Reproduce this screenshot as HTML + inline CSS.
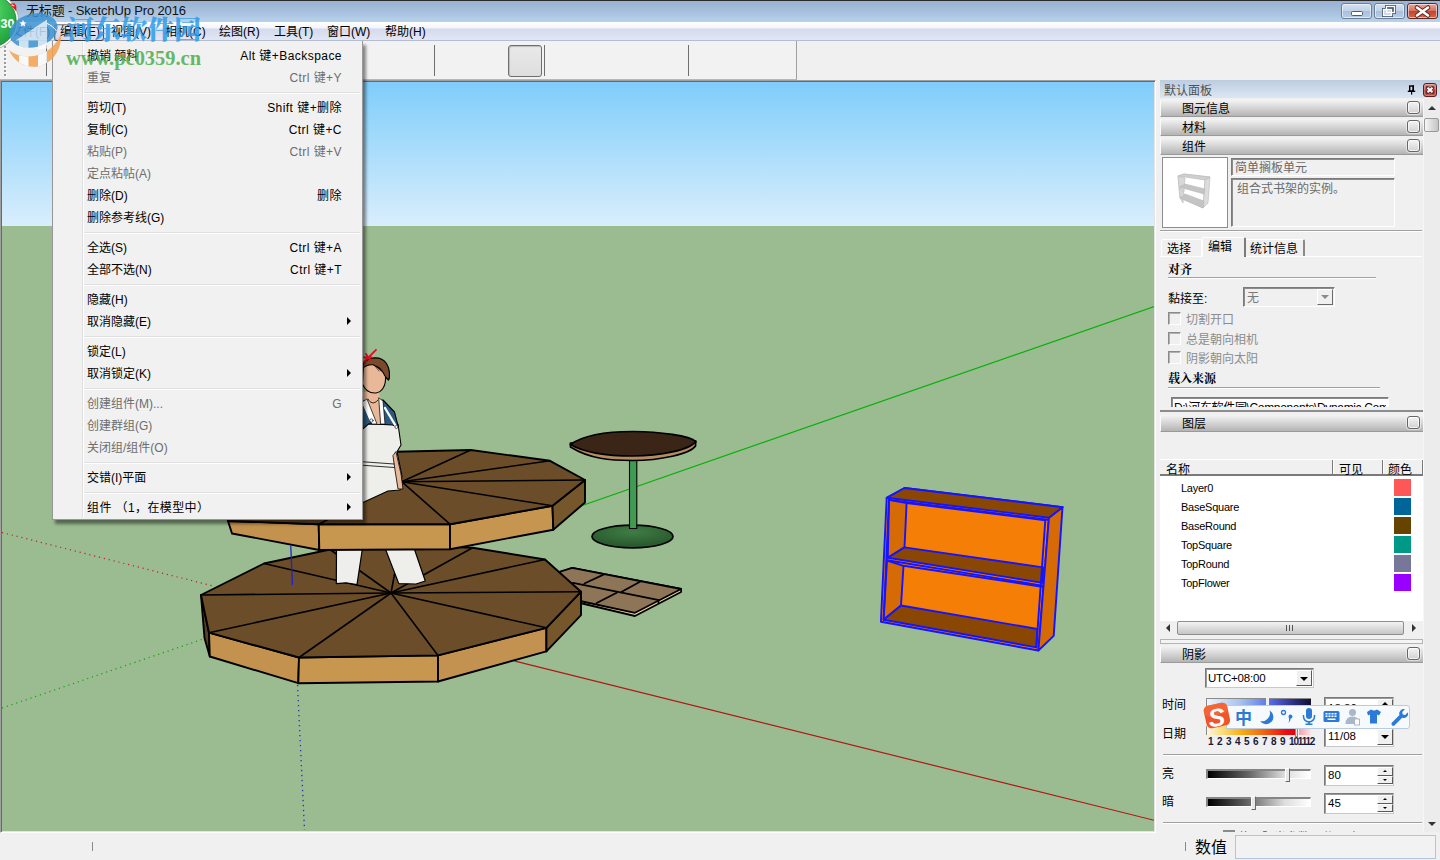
<!DOCTYPE html>
<html lang="zh-CN">
<head>
<meta charset="utf-8">
<title>无标题 - SketchUp Pro 2016</title>
<style>
*{box-sizing:border-box;margin:0;padding:0}
html,body{width:1440px;height:860px;overflow:hidden;background:#f0f0f0}
body{position:relative;font-family:"Liberation Sans","Noto Sans CJK SC",sans-serif;font-size:12px;color:#000}
.abs{position:absolute}
/* title bar */
#title{left:0;top:0;width:1440px;height:22px;background:linear-gradient(#98b3d3 0,#a3bddb 9px,#b9d2ec 21px);border-top:1px solid #2a2a2a}
#title .t{left:26px;top:1px;letter-spacing:-.15px;font-size:13px;line-height:18px;color:#111;white-space:nowrap}
.wb{top:2px;height:16px;border:1px solid #6d7f96;border-radius:3px;background:linear-gradient(#d3e0f0 0,#c2d3e8 48%,#a9c0dc 52%,#b9cde6 100%);box-shadow:inset 0 0 0 1px rgba(255,255,255,.55)}
#menubar{left:0;top:22px;width:1440px;height:19px;background:linear-gradient(#ffffff 0,#f3f5fb 6px,#d5daec 7px,#dde2f2 14px,#e2e7f5 18px);border-bottom:1px solid #b4bccf}
#menubar span{position:absolute;top:0;line-height:20px;font-size:12px;white-space:nowrap}
#toolbar{left:0;top:41px;width:1440px;height:39px;background:#f0f0f0}
.vsep{width:1px;background:#6f6f6f}
/* viewport */
#vp{left:0;top:80px;width:1156px;height:753px;background:#696969;border:1px solid;border-color:#a0a0a0 #fff #fff #a0a0a0}
#vp svg{position:absolute;left:1px;top:1px;border-right:1px solid #e3e3e3;border-bottom:1px solid #e3e3e3;box-sizing:content-box}
/* status */
#status{left:0;top:833px;width:1440px;height:27px;background:#f0f0f0}
/* menu */
#menu{left:52px;top:41px;width:311px;height:479px;background:#f1f1f1;border:1px solid #979797;border-top:none;box-shadow:3px 4px 3px rgba(0,0,0,.45)}
#menu .gut{position:absolute;left:29px;top:1px;bottom:1px;width:2px;border-left:1px solid #e0e0e0;border-right:1px solid #fff}
#menu .it{position:absolute;left:34px;right:20px;height:22px;line-height:26px;font-size:12px;white-space:nowrap}
#menu .it b{font-weight:normal;position:absolute;right:0;top:0;letter-spacing:.45px}
#menu .dis{color:#6d6d6d}
#menu .sp{position:absolute;left:31px;right:2px;height:2px;border-top:1px solid #e0e0e0;border-bottom:1px solid #fff}
#menu .ar{position:absolute;right:11px;width:0;height:0;border-left:4px solid #000;border-top:4px solid transparent;border-bottom:4px solid transparent}
/* panel */
#panel{left:0;top:0;width:0;height:0;white-space:nowrap}
.sunk{border:1px solid;border-color:#7a7a7a #fff #fff #7a7a7a;box-shadow:inset 1px 1px 0 #8c8c8c;background:#f0f0f0}
.hl{height:2px;border-top:1px solid #a0a0a0;border-bottom:1px solid #fff}
.bs{font-family:"Liberation Serif","Noto Serif CJK SC",serif;font-weight:bold;font-size:12px;line-height:19px}
.sec{width:263px;height:17px;background:linear-gradient(#f4f4f4 0,#d8d8d8 45%,#b4b4b4 100%);border-left:1px solid #fafafa;border-bottom:1px solid #9a9a9a;font-size:12px;line-height:19px;padding-left:21px;white-space:nowrap}
.sec i{position:absolute;right:3px;top:1px;width:13px;height:13px;border:1px solid #666;border-radius:3px;background:linear-gradient(#f4f4f4,#d2d2d2);box-shadow:inset 0 0 0 1px rgba(255,255,255,.7),0 0 0 1px rgba(240,240,240,.7)}
</style>
</head>
<body>
<div id="title" class="abs"><div class="t abs">无标题 - SketchUp Pro 2016</div>
<div class="wb abs" style="left:1341px;width:31px"></div>
<div class="wb abs" style="left:1374px;width:31px"></div>
<div class="wb abs" style="left:1407px;width:31px;background:linear-gradient(#e9a99b 0,#d9705c 48%,#c4442c 52%,#d2674c 100%);border-color:#5c2a22"></div>
<svg class="abs" style="left:1341px;top:1px" width="97" height="18" viewBox="0 0 97 18">
<rect x="10.500" y="9.500" width="11" height="4" rx="1" fill="#fff" stroke="#4a5a70" stroke-width="1"/>
<g fill="none" stroke="#4a5a70" stroke-width="3"><rect x="45.500" y="4.500" width="8" height="6"/><rect x="42.500" y="7.500" width="8" height="6"/></g>
<rect x="42.500" y="7.500" width="8" height="6" fill="#c6d6ea"/>
<g fill="none" stroke="#fff" stroke-width="1.300"><rect x="45.500" y="4.500" width="8" height="6"/><rect x="42.500" y="7.500" width="8" height="6"/></g>
<path d="M76 5.500 L87 13.500 M87 5.500 L76 13.500" stroke="#5a2a22" stroke-width="4.500" stroke-linecap="round"/>
<path d="M76 5.500 L87 13.500 M87 5.500 L76 13.500" stroke="#fff" stroke-width="2.600" stroke-linecap="round"/>
</svg>
</div>
<div id="menubar" class="abs">
<div class="abs" style="left:54px;top:2px;width:50px;height:17px;border:1px solid;border-color:#8a8f9c #4d525e #3a3f4a #6a6f7c;border-radius:3px;background:linear-gradient(#e9ecf5,#d3d8e8);box-shadow:inset 1px 1px 1px rgba(0,0,0,.18)"></div>
<span style="left:11px;color:#1a1a1a">文件(F)</span><span style="left:60px">编辑(E)</span><span style="left:111px">视图(V)</span><span style="left:165px">相机(C)</span><span style="left:219px">绘图(R)</span><span style="left:274px">工具(T)</span><span style="left:327px">窗口(W)</span><span style="left:385px">帮助(H)</span>
</div>
<div id="toolbar" class="abs">
<div class="abs" style="left:0;top:0;width:797px;height:39px;background:#f2f2f2;border-right:1px solid #a0a0a0;border-bottom:1px solid #b8b8b8"></div>
<div class="abs" style="left:4px;top:3px;width:2px;height:34px;background:repeating-linear-gradient(#f0f0f0 0,#f0f0f0 2px,#9c9c9c 2px,#9c9c9c 4px)"></div><div class="abs" style="left:5px;top:4px;width:2px;height:34px;background:repeating-linear-gradient(transparent 0,transparent 3px,#fff 3px,#fff 4px)"></div>
<div class="vsep abs" style="left:46px;top:4px;height:31px"></div>
<div class="vsep abs" style="left:434px;top:4px;height:31px"></div>
<div class="vsep abs" style="left:544px;top:4px;height:31px"></div>
<div class="vsep abs" style="left:688px;top:4px;height:31px"></div>
<div class="abs" style="left:508px;top:4px;width:34px;height:32px;border:1px solid #6e6e6e;border-radius:3px;background:linear-gradient(#e9e9e9,#dedede);box-shadow:inset 1px 1px 1px #bdbdbd"></div>
</div>
<div id="vp" class="abs">
<svg width="1152" height="749" viewBox="2 82 1152 749">
<defs><linearGradient id="sky" x1="0" y1="0" x2="0" y2="1"><stop offset="0" stop-color="#7fcdfb"/><stop offset="1" stop-color="#d9eefc"/></linearGradient><radialGradient id="tb" cx="0.5" cy="0.3" r="0.6"><stop offset="0" stop-color="#3f7d45"/><stop offset="1" stop-color="#2a5a2e"/></radialGradient></defs>
<rect x="2" y="82" width="1153" height="144" fill="url(#sky)"/>
<rect x="2" y="226" width="1153" height="605" fill="#9bbc91"/>
<!--SCENE-->
<g stroke-linejoin="round" stroke-linecap="round">
<!-- axes -->
<line x1="583" y1="505.2" x2="1155" y2="306.2" stroke="#06b006" stroke-width="1.2"/>
<line x1="515" y1="661.2" x2="1155" y2="820.5" stroke="#b01818" stroke-width="1.2"/>
<line x1="2" y1="532.5" x2="215" y2="586.5" stroke="#c02020" stroke-width="1.2" stroke-dasharray="1.2 3.8" stroke-linecap="butt"/>
<line x1="2" y1="708" x2="206" y2="638" stroke="#10a010" stroke-width="1.2" stroke-dasharray="1.2 3.8" stroke-linecap="butt"/>
<line x1="297.5" y1="685" x2="304.5" y2="830" stroke="#2030c0" stroke-width="1.3" stroke-dasharray="1.3 3.7" stroke-linecap="butt"/>
<!-- tiles -->
<g stroke="#000" stroke-width="1.8">
<polygon points="560,573 572.2,567.8 681.1,589 681.1,592 635,616 582.2,603.5 560,590" fill="#f0d3a2"/>
<polygon points="560,571.7 572.2,567.8 681.1,589 635,612.8 582.2,601.5 565,592" fill="#8f7558"/>
<line x1="573" y1="582.8" x2="659" y2="600.2"/>
<line x1="604" y1="574.4" x2="584.4" y2="583.5"/>
<line x1="640" y1="581.7" x2="621.7" y2="591.7"/>
<line x1="616.7" y1="592.8" x2="596.7" y2="603"/>
<line x1="658.5" y1="600.4" x2="658.5" y2="603"/>
</g>
<!-- lower platform -->
<g stroke="#000" stroke-width="1.9">
<polygon points="201,595 209,632.7 209.8,656.5 204.500,638" fill="#5a4020"/>
<polygon points="209,632.7 299,657.5 298.3,683.2 209.8,656.5" fill="#c4924f"/>
<polygon points="299,657.5 438,655.4 438,681.5 298.3,683.2" fill="#c8974f"/>
<polygon points="438,655.4 546.4,627.8 546.4,651.4 438,681.5" fill="#c39150"/>
<polygon points="546.4,627.8 581,591.7 581,615.2 546.4,651.4" fill="#76572c"/>
<polygon points="201,595 264,563.5 330,549.5 400,545 472.6,547.7 545,559.5 581,591.7 546.4,627.8 438,655.4 299,657.5 209,632.7" fill="#6b4e29"/>
<g stroke-width="1.6">
<line x1="391" y1="593" x2="201" y2="595"/><line x1="391" y1="593" x2="264" y2="563.5"/><line x1="391" y1="593" x2="330" y2="549.5"/><line x1="391" y1="593" x2="400" y2="545"/>
<line x1="391" y1="593" x2="472.6" y2="547.7"/><line x1="391" y1="593" x2="545" y2="559.5"/><line x1="391" y1="593" x2="581" y2="591.7"/><line x1="391" y1="593" x2="546.4" y2="627.8"/>
<line x1="391" y1="593" x2="438" y2="655.4"/><line x1="391" y1="593" x2="299" y2="657.5"/><line x1="391" y1="593" x2="209" y2="632.7"/>
</g>
</g>
<!-- legs -->
<g stroke="#000" stroke-width="1.2" fill="#eeeeea">
<polygon points="336.5,548 362.5,548 357,584.6 346,582.8 336.3,583.6"/>
<polygon points="385,548 414,548 425.3,581 416,584 398.8,583.6"/>
</g>
<line x1="290.8" y1="546.5" x2="292.4" y2="584.4" stroke="#2020c8" stroke-width="1.3"/>
<!-- upper platform -->
<g stroke="#000" stroke-width="1.9">
<polygon points="228,521 318.7,524.2 319.3,550 232,533.5" fill="#c4924f"/>
<polygon points="318.7,524.2 450,524.2 450,549.2 319.3,550" fill="#c8974f"/>
<polygon points="450,524.2 552.5,505.8 553.3,529.7 450,549.2" fill="#c6954f"/>
<polygon points="552.5,505.8 585,480 585,502.5 553.3,529.7" fill="#76572c"/>
<polygon points="228,521 222,497 262,470 330,456 395.8,451.7 470.8,450 550,460.8 585,480 552.5,505.8 450,524.2 318.7,524.2" fill="#6b4e29"/>
<g stroke-width="1.6">
<line x1="401.7" y1="481.7" x2="470.8" y2="450"/><line x1="401.7" y1="481.7" x2="550" y2="460.8"/><line x1="401.7" y1="481.7" x2="585" y2="480"/>
<line x1="401.7" y1="481.7" x2="552.5" y2="505.8"/><line x1="401.7" y1="481.7" x2="450" y2="524.2"/><line x1="401.7" y1="481.7" x2="318.7" y2="524.2"/>
<line x1="401.7" y1="481.7" x2="395.8" y2="451.7"/>
</g>
</g>
<!-- woman upper body -->
<g stroke="#000" stroke-width="1.1">
<polygon points="352,424 398,424 401,445 397,451.7 402,476 400,490 388,491 363,502.5 340,505 340,440" fill="#eeeeea"/>
<polygon points="396,452 401,474 403,489 398,489 395,470 393,456" fill="#e8b898" stroke-width="0.8"/>
<line x1="352" y1="461" x2="394" y2="464" stroke-width="0.8"/><line x1="352" y1="464.5" x2="394" y2="467.5" stroke-width="0.8"/>
<polygon points="350,402 383,400 394.500,412 398.300,427 392.500,425 369,423.700 350,440" fill="#2a5a80"/>
<polygon points="362,392 379,392 380,399 382,424 372,424 364,402" fill="#e8b898" stroke="none"/>
<polygon points="362,402 367,399 377,424 372,424" fill="#fff" stroke-width="0.7"/>
<polygon points="379,398 383,401 385,424 381,424" fill="#fff" stroke-width="0.7"/>
<path d="M368,399 C370,403 374,405 378,400" fill="none" stroke-width="0.8"/>
<line x1="385" y1="408" x2="397" y2="428" stroke="#fff" stroke-width="2.400"/>
<line x1="364" y1="405" x2="371" y2="421" stroke="#fff" stroke-width="2"/>
<circle cx="371.500" cy="420.500" r="1.600" fill="#fff" stroke-width="0.6"/><circle cx="396.500" cy="427" r="1.600" fill="#fff" stroke-width="0.6"/>
<path d="M363.500,364 C368,356.500 381,356 386.500,364 C390,370 390,378 388.500,380 L385.500,377 C386,386 382,392 376,393 C370,393.500 365,390 362.500,384 Z" fill="#e8b898"/>
<path d="M362.500,367 C364,357 380,354.500 386.500,363.500 C390,369 390,377 388.500,380 L385,376 C383,371 378,367 373,364.800 C369,364.500 365,366 362.500,368.500 Z" fill="#7b4a2a"/>
<path d="M375,366 l4,5 M377,366 l4,5 M379,367 l3,4" stroke-width="0.6" fill="none"/>
<path d="M363.400,362.500 L376,349.800 M364,357.500 L372,357.500 M366,354 l4,6" stroke="#e01020" stroke-width="1.800" fill="none"/>
</g>
<!-- table -->
<g stroke="#000" stroke-width="1.7">
<ellipse cx="632.5" cy="536.5" rx="40.5" ry="11.3" fill="url(#tb)"/>
<rect x="629.5" y="457" width="7.3" height="71.5" fill="#3f9a52" stroke-width="1.1"/>
<path d="M570.5,447 C590,459 610,460.5 633,460.5 C660,460.5 690,454 695.5,446 L695.8,441 L570.4,443 Z" fill="#b48c64"/>
<path d="M570.4,444.5 C585,434 610,431.5 633,431.5 C660,431.5 690,436 695.8,441.5 C690,450 660,456 633,456 C610,456 585,453 570.4,444.5 Z" fill="#3a2517"/>
</g>
<!-- bookshelf -->
<g stroke="#1414ff" stroke-width="1.9">
<polygon points="886.7,497.8 904.5,488 1062.5,507.2 1048.9,517.7 1038.4,650.5 880.9,621.8" fill="#f57f06"/>
<polygon points="1048.9,517.7 1062.5,507.2 1053.7,635.9 1038.4,650.5" fill="#d66b05"/>
<polygon points="886.7,497.8 904.5,488 1062.5,507.2 1048.9,517.7" fill="#8a4704"/>
<polygon points="889,499.9 906.6,503 904.5,547.4 887.8,557.8" fill="#d66b05"/>
<polygon points="887,560.5 903.5,565.8 901,605.5 883.6,619.7" fill="#d66b05"/>
<polygon points="887.8,557.8 904.5,547.4 1043.2,567.4 1042.6,582.9" fill="#8a4704"/>
<polygon points="883.6,619.7 901,605.5 1037.4,629 1036.3,647.4" fill="#8a4704"/>
<line x1="906.6" y1="503" x2="1045.3" y2="520.2"/>
<line x1="889" y1="499.9" x2="1047.4" y2="519.7"/>
<line x1="887.3" y1="560.3" x2="1042.3" y2="585.6"/>
<line x1="903.5" y1="565.8" x2="1042" y2="586.7"/>
<line x1="1045.3" y1="520.2" x2="1036.3" y2="647.4"/>
<line x1="889" y1="499.9" x2="883.6" y2="619.7"/>
</g>
</g>
<!--/SCENE-->
</svg>
</div>
<div id="panel" class="abs">
<div class="abs" style="left:1160px;top:80px;width:280px;height:18px;background:linear-gradient(#bccde0,#dbe6f2)"></div>
<div class="abs" style="left:1164px;top:82px;font-size:12px;line-height:19px;color:#505050">默认面板</div>
<svg class="abs" style="left:1407px;top:85px" width="10" height="10" viewBox="0 0 10 10"><rect x="2.700" y="1" width="3.600" height="5" fill="none" stroke="#000" stroke-width="1.400"/><rect x="5.500" y="0.300" width="1.500" height="5.700" fill="#000"/><rect x="0.800" y="5.600" width="7.400" height="1.400" fill="#000"/><rect x="4" y="7" width="1.200" height="2.600" fill="#000"/></svg>
<div class="abs" style="left:1423px;top:83px;width:14px;height:14px;border:1px solid #5a1e22;border-radius:3px;background:linear-gradient(#dc8e82,#c4564a 45%,#ae3528 55%,#c05a48);box-shadow:inset 0 0 0 1px rgba(255,255,255,.25)"></div>
<svg class="abs" style="left:1425px;top:85px" width="10" height="10" viewBox="0 0 10 10"><path d="M2.500 2.700L7.500 7.300M7.500 2.700L2.500 7.300" stroke="#4a3040" stroke-width="3.400" stroke-linecap="round"/><path d="M2.500 2.700L7.500 7.300M7.500 2.700L2.500 7.300" stroke="#fff" stroke-width="1.900"/></svg>
<div class="sec abs" style="left:1160px;top:100px">图元信息<i></i></div>
<div class="sec abs" style="left:1160px;top:119px">材料<i></i></div>
<div class="sec abs" style="left:1160px;top:138px">组件<i></i></div>
<div class="sec abs" style="left:1160px;top:415px">图层<i></i></div>
<div class="sec abs" style="left:1160px;top:646px">阴影<i></i></div>
<div class="abs" style="left:1423px;top:99px;width:17px;height:733px;background:#ececec;border-left:1px solid #f6f6f6"></div>
<div class="abs" style="left:1428px;top:106px;width:0;height:0;border-left:4px solid transparent;border-right:4px solid transparent;border-bottom:4px solid #333"></div>
<div class="abs" style="left:1424px;top:118px;width:15px;height:14px;border:1px solid #9a9a9a;border-radius:2px;background:linear-gradient(90deg,#f6f6f6,#dcdcdc 50%,#c4c4c4)"></div>
<div class="abs" style="left:1428px;top:822px;width:0;height:0;border-left:4px solid transparent;border-right:4px solid transparent;border-top:4px solid #333"></div>
<div class="abs" style="left:1162px;top:157px;width:66px;height:71px;background:#fff;border:1px solid #8c8c8c"></div>
<svg class="abs" style="left:1176px;top:173px" width="38" height="36" viewBox="0 0 38 36"><g stroke="#b8b8b8" stroke-width=".6">
<polygon points="2,3 8,1 34,4 29,7 27,35 4,25" fill="#fff"/>
<polygon points="2,3 8,1 34,4 29,7" fill="#cfcfcf"/>
<polygon points="2,3 9,5 8,19 3,14" fill="#d8d8d8"/><polygon points="3,15 8,20 7,30 4,25" fill="#d8d8d8"/>
<polygon points="29,7 34,4 32,30 27,35" fill="#dcdcdc"/>
<polygon points="3,14 9,11 29,16 28,21" fill="#c4c4c4"/>
<polygon points="4,25 9,21 28,28 27,35" fill="#c4c4c4"/>
</g></svg>
<div class="sunk abs" style="left:1231px;top:158px;width:164px;height:18px"></div>
<div class="abs" style="left:1235px;top:159px;font-size:12px;line-height:19px;color:#6a6a6a">简单搁板单元</div>
<div class="sunk abs" style="left:1231px;top:178px;width:164px;height:49px"></div>
<div class="abs" style="left:1237px;top:180px;font-size:12px;line-height:19px;color:#6a6a6a">组合式书架的实例。</div>
<div class="hl abs" style="left:1160px;top:230px;width:262px"></div>
<div class="abs" style="left:1161px;top:239px;width:41px;height:18px;border:1px solid #fff;border-bottom:none;border-radius:2px 2px 0 0"></div>
<div class="abs" style="left:1246px;top:239px;width:59px;height:18px;border-top:1px solid #fff;border-right:2px solid #8a8a8a;border-radius:0 2px 0 0"></div>
<div class="abs" style="left:1160px;top:256px;width:262px;height:1px;background:#fff"></div>
<div class="abs" style="left:1202px;top:237px;width:44px;height:20px;background:#f0f0f0;border-top:1px solid #fff;border-left:1px solid #fff;border-right:2px solid #7a7a7a;border-radius:2px 2px 0 0"></div>
<div class="abs" style="left:1167px;top:240px;font-size:12px;line-height:19px">选择</div>
<div class="abs" style="left:1208px;top:238px;font-size:12px;line-height:19px">编辑</div>
<div class="abs" style="left:1250px;top:240px;font-size:12px;line-height:19px">统计信息</div>
<div class="abs bs" style="left:1168px;top:261px">对齐</div>
<div class="hl abs" style="left:1168px;top:277px;width:208px"></div>
<div class="abs" style="left:1168px;top:290px;font-size:12px;line-height:19px">黏接至:</div>
<div class="sunk abs" style="left:1243px;top:287px;width:92px;height:20px"></div>
<div class="abs" style="left:1247px;top:289px;font-size:12px;line-height:19px;color:#7a7a7a">无</div>
<div class="abs" style="left:1317px;top:289px;width:16px;height:16px;background:#f0f0f0;border:1px solid;border-color:#fff #6a6a6a #6a6a6a #fff"></div>
<div class="abs" style="left:1321px;top:295px;width:0;height:0;border-left:4px solid transparent;border-right:4px solid transparent;border-top:4px solid #8a8a8a"></div>
<div class="abs" style="left:1168px;top:312px;width:13px;height:13px;border:1px solid;border-color:#8a8a8a #fff #fff #8a8a8a;box-shadow:inset 1px 1px 0 #b0b0b0"></div>
<div class="abs" style="left:1186px;top:311px;font-size:12px;line-height:19px;color:#8c8c8c">切割开口</div>
<div class="abs" style="left:1168px;top:332px;width:13px;height:13px;border:1px solid;border-color:#8a8a8a #fff #fff #8a8a8a;box-shadow:inset 1px 1px 0 #b0b0b0"></div>
<div class="abs" style="left:1186px;top:331px;font-size:12px;line-height:19px;color:#8c8c8c">总是朝向相机</div>
<div class="abs" style="left:1168px;top:351px;width:13px;height:13px;border:1px solid;border-color:#8a8a8a #fff #fff #8a8a8a;box-shadow:inset 1px 1px 0 #b0b0b0"></div>
<div class="abs" style="left:1186px;top:350px;font-size:12px;line-height:19px;color:#8c8c8c">阴影朝向太阳</div>
<div class="abs bs" style="left:1168px;top:370px">载入来源</div>
<div class="hl abs" style="left:1168px;top:387px;width:212px"></div>
<div class="abs" style="left:1171px;top:397px;width:218px;height:10px;overflow:hidden"><div class="sunk" style="width:218px;height:20px;background:#fff"></div><div style="position:absolute;left:3px;top:3px;font-size:12px;line-height:17px;white-space:nowrap;width:212px;overflow:hidden;letter-spacing:-.35px">D:\河东软件园\Components\Dynamic Components</div></div>
<div class="abs" style="left:1160px;top:410px;width:263px;height:2px;background:#8c8c8c"></div>
<div class="abs" style="left:1160px;top:475px;width:263px;height:146px;background:#fff"></div>
<div class="abs" style="left:1160px;top:459px;width:263px;height:17px;background:#f0f0f0;border-bottom:2px solid #7a7a7a;border-top:1px solid #fff"></div>
<div class="abs" style="left:1332px;top:460px;width:2px;height:14px;background:#7a7a7a;border-right:1px solid #fff"></div>
<div class="abs" style="left:1382px;top:460px;width:2px;height:14px;background:#7a7a7a;border-right:1px solid #fff"></div>
<div class="abs" style="left:1422px;top:460px;width:2px;height:14px;background:#7a7a7a;border-right:1px solid #fff"></div>
<div class="abs" style="left:1166px;top:461px;font-size:12px;line-height:19px">名称</div>
<div class="abs" style="left:1339px;top:461px;font-size:12px;line-height:19px">可见</div>
<div class="abs" style="left:1388px;top:461px;font-size:12px;line-height:19px">颜色</div>
<div class="abs" style="left:1181px;top:480px;font-size:11px;line-height:17px;letter-spacing:-.25px">Layer0</div>
<div class="abs" style="left:1394px;top:479px;width:17px;height:17px;background:#ff5757"></div>
<div class="abs" style="left:1181px;top:499px;font-size:11px;line-height:17px;letter-spacing:-.25px">BaseSquare</div>
<div class="abs" style="left:1394px;top:498px;width:17px;height:17px;background:#006699"></div>
<div class="abs" style="left:1181px;top:518px;font-size:11px;line-height:17px;letter-spacing:-.25px">BaseRound</div>
<div class="abs" style="left:1394px;top:517px;width:17px;height:17px;background:#664400"></div>
<div class="abs" style="left:1181px;top:537px;font-size:11px;line-height:17px;letter-spacing:-.25px">TopSquare</div>
<div class="abs" style="left:1394px;top:536px;width:17px;height:17px;background:#009988"></div>
<div class="abs" style="left:1181px;top:556px;font-size:11px;line-height:17px;letter-spacing:-.25px">TopRound</div>
<div class="abs" style="left:1394px;top:555px;width:17px;height:17px;background:#777799"></div>
<div class="abs" style="left:1181px;top:575px;font-size:11px;line-height:17px;letter-spacing:-.25px">TopFlower</div>
<div class="abs" style="left:1394px;top:574px;width:17px;height:17px;background:#9900ff"></div>
<div class="abs" style="left:1160px;top:621px;width:262px;height:15px;background:#f0f0f0"></div>
<div class="abs" style="left:1177px;top:621px;width:227px;height:14px;border:1px solid #8e8e8e;border-radius:2px;background:linear-gradient(#f4f4f4,#dcdcdc 50%,#c6c6c6)"></div>
<div class="abs" style="left:1286px;top:625px;width:7px;height:6px;background:repeating-linear-gradient(90deg,#555 0,#555 1px,transparent 1px,transparent 3px)"></div>
<div class="abs" style="left:1166px;top:624px;width:0;height:0;border-top:4px solid transparent;border-bottom:4px solid transparent;border-right:4px solid #333"></div>
<div class="abs" style="left:1412px;top:624px;width:0;height:0;border-top:4px solid transparent;border-bottom:4px solid transparent;border-left:4px solid #333"></div>
<div class="abs" style="left:1160px;top:639px;width:263px;height:5px;border:1px solid #b4b4b4;background:#f4f4f4"></div>
<div class="abs" style="left:1205px;top:668px;width:109px;height:20px;background:#fff;border:1px solid;border-color:#7a7a7a #c8c8c8 #c8c8c8 #7a7a7a;box-shadow:inset 1px 1px 0 #9a9a9a"></div>
<div class="abs" style="left:1208px;top:669px;font-size:11.5px;line-height:19px;letter-spacing:-.2px">UTC+08:00</div>
<div class="abs" style="left:1296px;top:670px;width:16px;height:16px;background:#f0f0f0;border:1px solid;border-color:#fff #5a5a5a #5a5a5a #fff"></div>
<div class="abs" style="left:1300px;top:677px;width:0;height:0;border-left:4px solid transparent;border-right:4px solid transparent;border-top:4px solid #000"></div>
<div class="abs" style="left:1162px;top:695px;font-size:12px;line-height:20px">时间</div>
<div class="abs" style="left:1162px;top:724px;font-size:12px;line-height:20px">日期</div>
<div class="abs" style="left:1206px;top:698px;width:60px;height:12px;border-top:1px solid #8a8a8a;border-left:1px solid #8a8a8a;background:linear-gradient(90deg,#eef4fb,#a9c4ee 55%,#5f7fe8)"></div>
<div class="abs" style="left:1269px;top:698px;width:42px;height:12px;border-top:1px solid #8a8a8a;background:linear-gradient(90deg,#5b6cf0,#2a2f80 60%,#101030)"></div>
<div class="abs" style="left:1324px;top:697px;width:70px;height:20px;background:#fff;border:1px solid;border-color:#7a7a7a #c8c8c8 #c8c8c8 #7a7a7a;box-shadow:inset 1px 1px 0 #9a9a9a"></div>
<div class="abs" style="left:1328px;top:699px;font-size:11.5px;line-height:19px">13:30</div>
<div class="abs" style="left:1377px;top:699px;width:16px;height:8px;background:#f0f0f0;border:1px solid;border-color:#fff #5a5a5a #5a5a5a #fff"></div>
<div class="abs" style="left:1382px;top:702px;width:0;height:0;border-left:3px solid transparent;border-right:3px solid transparent;border-bottom:3px solid #000"></div>
<div class="abs" style="left:1206px;top:726px;width:90px;height:9px;border-left:1px solid #8a8a8a;background:linear-gradient(90deg,#fdf6e0,#fbe08a 15%,#f7b018 38%,#f26a10 62%,#ee1010 88%,#e00010)"></div>
<div class="abs" style="left:1299px;top:726px;width:12px;height:9px;background:linear-gradient(90deg,#f9a0a8,#fde4e6)"></div>
<div class="abs" style="left:1295px;top:724px;width:3px;height:13px;background:#e4e4e4;border:1px solid #8a8a8a"></div>
<div class="abs" style="left:1208px;top:736px;font-size:10px;line-height:12px;font-weight:bold;color:#1a1a3a"><span style="letter-spacing:3.45px">123456789</span><span style="letter-spacing:-1.2px">101112</span></div>
<div class="abs" style="left:1324px;top:727px;width:70px;height:20px;background:#fff;border:1px solid;border-color:#7a7a7a #c8c8c8 #c8c8c8 #7a7a7a;box-shadow:inset 1px 1px 0 #9a9a9a"></div>
<div class="abs" style="left:1328px;top:727px;font-size:11.5px;line-height:19px">11/08</div>
<div class="abs" style="left:1377px;top:729px;width:16px;height:16px;background:#f0f0f0;border:1px solid;border-color:#fff #5a5a5a #5a5a5a #fff"></div>
<div class="abs" style="left:1381px;top:735px;width:0;height:0;border-left:4px solid transparent;border-right:4px solid transparent;border-top:4px solid #000"></div>
<div class="hl abs" style="left:1163px;top:754px;width:259px"></div>
<div class="abs" style="left:1162px;top:764px;font-size:12px;line-height:21px">亮</div>
<div class="abs" style="left:1206px;top:769px;width:105px;height:10px;border:solid;border-width:2px 1px 1px 2px;border-color:#858585 #fff #fff #858585;background:linear-gradient(90deg,#000,#666 40%,#ddd 75%,#fff)"></div>
<div class="abs" style="left:1285px;top:768px;width:5px;height:14px;background:#e8e8e8;border:1px solid;border-color:#fff #6a6a6a #6a6a6a #fff"></div>
<div class="abs" style="left:1324px;top:765px;width:70px;height:21px;background:#fff;border:1px solid;border-color:#7a7a7a #c8c8c8 #c8c8c8 #7a7a7a;box-shadow:inset 1px 1px 0 #9a9a9a"></div>
<div class="abs" style="left:1328px;top:765px;font-size:11.5px;line-height:20px">80</div>
<div class="abs" style="left:1377px;top:767px;width:16px;height:9px;background:#f0f0f0;border:1px solid;border-color:#fff #5a5a5a #5a5a5a #fff"></div>
<div class="abs" style="left:1377px;top:776px;width:16px;height:8px;background:#f0f0f0;border:1px solid;border-color:#fff #5a5a5a #5a5a5a #fff"></div>
<div class="abs" style="left:1383px;top:770px;width:0;height:0;border-left:2px solid transparent;border-right:2px solid transparent;border-bottom:2px solid #000"></div>
<div class="abs" style="left:1383px;top:779px;width:0;height:0;border-left:2px solid transparent;border-right:2px solid transparent;border-top:2px solid #000"></div>
<div class="abs" style="left:1162px;top:792px;font-size:12px;line-height:21px">暗</div>
<div class="abs" style="left:1206px;top:797px;width:105px;height:10px;border:solid;border-width:2px 1px 1px 2px;border-color:#858585 #fff #fff #858585;background:linear-gradient(90deg,#000,#666 40%,#ddd 75%,#fff)"></div>
<div class="abs" style="left:1251px;top:796px;width:5px;height:14px;background:#e8e8e8;border:1px solid;border-color:#fff #6a6a6a #6a6a6a #fff"></div>
<div class="abs" style="left:1324px;top:793px;width:70px;height:21px;background:#fff;border:1px solid;border-color:#7a7a7a #c8c8c8 #c8c8c8 #7a7a7a;box-shadow:inset 1px 1px 0 #9a9a9a"></div>
<div class="abs" style="left:1328px;top:793px;font-size:11.5px;line-height:20px">45</div>
<div class="abs" style="left:1377px;top:795px;width:16px;height:9px;background:#f0f0f0;border:1px solid;border-color:#fff #5a5a5a #5a5a5a #fff"></div>
<div class="abs" style="left:1377px;top:804px;width:16px;height:8px;background:#f0f0f0;border:1px solid;border-color:#fff #5a5a5a #5a5a5a #fff"></div>
<div class="abs" style="left:1383px;top:798px;width:0;height:0;border-left:2px solid transparent;border-right:2px solid transparent;border-bottom:2px solid #000"></div>
<div class="abs" style="left:1383px;top:807px;width:0;height:0;border-left:2px solid transparent;border-right:2px solid transparent;border-top:2px solid #000"></div>
<div class="hl abs" style="left:1163px;top:822px;width:259px"></div>
<div class="abs" style="left:1223px;top:830px;width:12px;height:2px;background:#8a8a8a"></div>
<div class="abs" style="left:1223px;top:829px;width:190px;height:3px;overflow:hidden;font-size:12px;line-height:14px;color:#555"><span style="position:absolute;left:15px;top:2px">使用阳光参数区分明暗面</span></div>
<div class="abs" style="left:1226px;top:705px;width:184px;height:24px;background:#f7fafd;border:1px solid #b9cbe0;border-radius:0 3px 3px 0"></div>
<svg class="abs" style="left:1201px;top:700px" width="212" height="32" viewBox="1201 700 212 32">
<g transform="rotate(-12 1217 716)"><rect x="1205" y="704" width="24" height="23" rx="5" fill="#f2542a"/><rect x="1205" y="704" width="24" height="11" rx="5" fill="#f7703e" opacity=".6"/></g>
<text x="1208" y="726" font-family="Liberation Sans,sans-serif" font-weight="bold" font-style="italic" font-size="25" fill="#fff" transform="rotate(-8 1217 716)">S</text>
<g fill="#2b7bd6">
<path d="M1269.500 710.500 A7.300 7.300 0 1 1 1260 721 A8 8 0 0 0 1269.500 710.500 Z"/>
<circle cx="1283.500" cy="712.500" r="2" fill="none" stroke="#2b7bd6" stroke-width="1.3"/>
<path d="M1288.500 716.500 a2 2 0 1 1 2.200 2 q0 3 -2.500 4.500 q1.500 -2 .800 -4.500z"/>
<rect x="1306" y="708" width="6" height="11" rx="3"/><path d="M1303.500 715 v1.500 a5.500 5.500 0 0 0 11 0 V715" fill="none" stroke="#2b7bd6" stroke-width="1.500"/><rect x="1308.200" y="721" width="1.600" height="3"/><rect x="1305.500" y="723.500" width="7" height="1.500"/>
<rect x="1323.500" y="711" width="16" height="11" rx="1.500"/>
<path d="M1367 712 l4 -2.500 q3 2 6 0 l4 2.500 -2 3.500 -2 -1 v9 h-7 v-9 l-2 1z"/>
<path d="M1392 722.500 l7.500 -7.500 a4.500 4.500 0 0 1 5.500 -5.800 l-2.800 2.800 .600 2.400 2.400 .600 2.800 -2.800 a4.500 4.500 0 0 1 -5.800 5.500 l-7.500 7.500 a1.700 1.700 0 0 1 -2.700 -2.700z"/>
</g>
<g fill="#fff"><rect x="1325.500" y="713" width="2" height="1.500"/><rect x="1328.500" y="713" width="2" height="1.500"/><rect x="1331.500" y="713" width="2" height="1.500"/><rect x="1334.500" y="713" width="2" height="1.500"/><rect x="1325.500" y="715.500" width="2" height="1.500"/><rect x="1328.500" y="715.500" width="2" height="1.500"/><rect x="1331.500" y="715.500" width="2" height="1.500"/><rect x="1334.500" y="715.500" width="2" height="1.500"/><rect x="1327.500" y="718.500" width="8" height="1.500"/></g>
<g fill="#a9b7c9"><circle cx="1352.500" cy="712.500" r="3.500"/><path d="M1345.500 724 q0 -7.500 7 -7.500 q7 0 7 7.500z"/><rect x="1354.500" y="719" width="5" height="6" fill="#fff" stroke="#a9b7c9" stroke-width="1"/></g>
<text x="1235" y="723.500" font-family="Liberation Sans,Noto Sans CJK SC,sans-serif" font-weight="bold" font-size="17" fill="#2b7bd6">中</text>
</svg>
</div>
<div id="status" class="abs">
<div class="abs" style="left:92px;top:9px;width:1px;height:9px;background:#8a8a8a"></div>
<div class="abs" style="left:1185px;top:9px;width:1px;height:9px;background:#8a8a8a"></div>
<div class="abs" style="left:1195px;top:4px;font-size:16px;line-height:22px;white-space:nowrap">数值</div>
<div class="abs" style="left:1235px;top:2px;width:201px;height:24px;border:1px solid #b4c4da;background:#f2f2f2"></div>
</div>
<div id="menu" class="abs">
<div class="gut"></div>
<div class="it" style="top:2px">撤销 颜料<b>Alt 键+Backspace</b></div>
<div class="it dis" style="top:24px">重复<b>Ctrl 键+Y</b></div>
<div class="it" style="top:54px">剪切(T)<b>Shift 键+删除</b></div>
<div class="it" style="top:76px">复制(C)<b>Ctrl 键+C</b></div>
<div class="it dis" style="top:98px">粘贴(P)<b>Ctrl 键+V</b></div>
<div class="it dis" style="top:120px">定点粘帖(A)</div>
<div class="it" style="top:142px">删除(D)<b>删除</b></div>
<div class="it" style="top:164px">删除参考线(G)</div>
<div class="it" style="top:194px">全选(S)<b>Ctrl 键+A</b></div>
<div class="it" style="top:216px">全部不选(N)<b>Ctrl 键+T</b></div>
<div class="it" style="top:246px">隐藏(H)</div>
<div class="it" style="top:268px">取消隐藏(E)</div>
<div class="ar" style="top:276px"></div>
<div class="it" style="top:298px">锁定(L)</div>
<div class="it" style="top:320px">取消锁定(K)</div>
<div class="ar" style="top:328px"></div>
<div class="it dis" style="top:350px">创建组件(M)...<b>G</b></div>
<div class="it dis" style="top:372px">创建群组(G)</div>
<div class="it dis" style="top:394px">关闭组/组件(O)</div>
<div class="it" style="top:424px">交错(I)平面</div>
<div class="ar" style="top:432px"></div>
<div class="it" style="letter-spacing:.4px;top:454px">组件 （1，在模型中）</div>
<div class="ar" style="top:462px"></div>
<div class="sp" style="top:51px"></div>
<div class="sp" style="top:191px"></div>
<div class="sp" style="top:243px"></div>
<div class="sp" style="top:295px"></div>
<div class="sp" style="top:347px"></div>
<div class="sp" style="top:421px"></div>
<div class="sp" style="top:451px"></div>
</div>
<div id="ov" class="abs" style="left:0;top:0;width:260px;height:80px;overflow:hidden;pointer-events:none">
<svg class="abs" style="left:0;top:0" width="260" height="80" viewBox="0 0 260 80">
<defs><radialGradient id="gc" cx="0.35" cy="0.3" r="0.8"><stop offset="0" stop-color="#8fe39a"/><stop offset=".5" stop-color="#3fc455"/><stop offset="1" stop-color="#1c9a3c"/></radialGradient>
<clipPath id="cc"><path d="M9,50 C14,62 26,68.500 38,66.500 C52,63.500 62,50 61,34 C56,46 46,54 34,56 C24,57.500 15,55 9,50 Z"/></clipPath></defs>
<circle cx="-10" cy="21" r="28.600" fill="#fff" stroke="#9aa6a0" stroke-width=".8"/>
<circle cx="-10" cy="21" r="26.200" fill="url(#gc)" stroke="#15803a" stroke-width=".8"/>
<text x="0.500" y="28" font-family="Liberation Sans,sans-serif" font-weight="bold" font-size="12.500" fill="#fff">30</text>
<polygon points="9.500,3.800 14.500,3.300 16.300,6 16.300,11.500 13,7.500" fill="#e01818"/><rect x="11.500" y="4.800" width="3" height="1.100" fill="#fff" transform="rotate(25 13 5.300)"/>
<g opacity=".85">
<ellipse cx="33.500" cy="30.500" rx="24.500" ry="16.800" transform="rotate(-14 33.500 30.500)" fill="#3c92d2"/>
<path id="cres" d="M9,50 C14,62 26,68.500 38,66.500 C52,63.500 62,50 61,34 C56,46 46,54 34,56 C24,57.500 15,55 9,50 Z" fill="#f2a24e"/>
<g clip-path="url(#cc)"><rect x="19" y="50" width="9.500" height="18" fill="#fbfbfb"/><rect x="38" y="50" width="9" height="18" fill="#fbfbfb"/></g>
<polygon points="15.500,40.500 47,19.500 47,48.500 38,49.500 38,40.500 28.500,40.500 28.500,48.500 19,47 19,40.500" fill="#fff" opacity=".72"/>
<path d="M47,23.500 C51,25 54.500,28 56.500,31" fill="none" stroke="#fff" stroke-width="1"/>
<polygon points="23,19.800 24,22.200 26.500,22.400 24.600,24 25.200,26.500 23,25.200 20.800,26.500 21.400,24 19.500,22.400 22,22.200" fill="#fff"/>
</g>
<text x="67" y="38.500" font-family="Liberation Serif,Noto Serif CJK SC,serif" font-weight="900" font-size="26.600" fill="#2e9ce8" opacity=".85" textLength="134" lengthAdjust="spacingAndGlyphs">河东软件园</text>
<text x="66" y="64.500" font-family="Liberation Serif,serif" font-weight="bold" font-size="20" fill="#4dae4d" opacity=".85" textLength="135" lengthAdjust="spacingAndGlyphs">www.pc0359.cn</text>
</svg></div>
</body>
</html>
